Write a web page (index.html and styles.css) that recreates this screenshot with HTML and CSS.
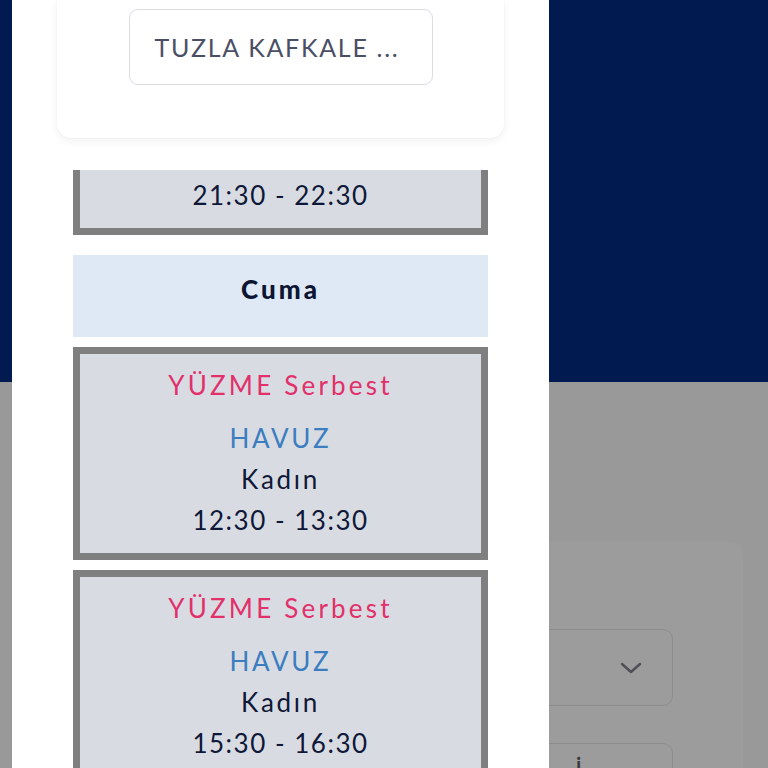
FILE: index.html
```html
<!DOCTYPE html>
<html lang="tr">
<head>
<meta charset="utf-8">
<title>Seans Programı</title>
<link rel="stylesheet" href="styles.css">
</head>
<body>
<div class="page">
  <div class="hero"></div>
  <div class="content">
    <div class="filter-card">
      <div class="select">
        <svg class="chev" width="22" height="12" viewBox="0 0 22 12"><polyline points="2,2 11,10 20,2" fill="none" stroke="#4f4f57" stroke-width="2.4" stroke-linecap="round" stroke-linejoin="round"/></svg>
      </div>
      <div class="select select-second"><span class="select-text">İ</span></div>
    </div>
  </div>
</div>

<div class="modal">
  <div class="top-card">
    <div class="facility-input">TUZLA KAFKALE ...</div>
  </div>
  <div class="schedule">
    <div class="list">
      <div class="session">
        <p class="activity">YÜZME Serbest</p>
        <p class="place">HAVUZ</p>
        <p class="line">Kadın</p>
        <p class="line time">21:30 - 22:30</p>
      </div>
      <div class="day">Cuma</div>
      <div class="session">
        <p class="activity">YÜZME Serbest</p>
        <p class="place">HAVUZ</p>
        <p class="line">Kadın</p>
        <p class="line time">12:30 - 13:30</p>
      </div>
      <div class="session">
        <p class="activity">YÜZME Serbest</p>
        <p class="place">HAVUZ</p>
        <p class="line">Kadın</p>
        <p class="line time">15:30 - 16:30</p>
      </div>
    </div>
  </div>
</div>
</body>
</html>
```
FILE: styles.css
```css
* { box-sizing: border-box; }
html, body { margin: 0; padding: 0; }
body {
  width: 768px;
  height: 768px;
  overflow: hidden;
  font-family: "Lato", "Noto Sans", sans-serif;
  background: #999999;
}
.page { width: 768px; height: 768px; }
.hero { height: 382px; background: #011a4f; }
.content { padding-top: 160px; }
.filter-card {
  margin-left: 25px;
  width: 718px;
  height: 300px;
  background: #9c9c9c;
  border-radius: 12px;
  padding: 87px 70px 0 70px;
  display: flex;
  flex-direction: column;
  gap: 37px;
}
.select {
  width: 578px;
  height: 77px;
  border: 1.5px solid #8c8c8c;
  border-radius: 10px;
  display: flex;
  align-items: center;
  justify-content: flex-end;
  padding: 0 30px 0 30px;
  flex: none;
}
.select-second {
  align-items: flex-start;
  justify-content: flex-start;
  padding: 12px 0 0 479px;
}
.select-text { color: #3a3a40; font-size: 26px; line-height: 30px; }
.chev { flex: none; }

.modal {
  position: absolute;
  left: 12px;
  top: 0;
  width: 537px;
  height: 768px;
  background: #ffffff;
  display: flex;
  flex-direction: column;
}
.top-card {
  margin: 0 45px;
  height: 138px;
  background: #ffffff;
  border-radius: 0 0 14px 14px;
  box-shadow: 0 3px 10px rgba(0, 0, 0, 0.06), 0 0 2px rgba(0, 0, 0, 0.05);
  padding-top: 9px;
  display: flex;
  justify-content: center;
  flex: none;
}
.facility-input {
  width: 304px;
  height: 76px;
  border: 1.5px solid #dcdde3;
  border-radius: 9px;
  padding-left: 25px;
  display: flex;
  align-items: center;
  font-size: 25px;
  color: #4b4f66;
  letter-spacing: 1.7px;
}
.schedule {
  margin-top: 32px;
  flex: 1;
  overflow: hidden;
  padding: 0 61px;
}
.list {
  margin-top: -148px;
  display: flex;
  flex-direction: column;
  gap: 10px;
}
.session {
  background: #d8dce2;
  border: 7px solid #7f7f7f;
  padding: 11px 0 12px;
  text-align: center;
}
.session p {
  margin: 0;
  height: 41px;
  line-height: 41px;
  font-size: 26px;
  letter-spacing: 2.7px;
  color: #0f1838;
  white-space: nowrap;
}
.session .time { letter-spacing: 1.5px; }
.session .activity { color: #e2306a; margin-bottom: 12px; letter-spacing: 3.2px; }
.session .place { color: #3b7dbf; }
.day {
  margin-top: 10px;
  height: 82px;
  background: #dfe9f6;
  padding-top: 16px;
  line-height: 36px;
  text-align: center;
  font-size: 26px;
  font-weight: 900;
  letter-spacing: 3px;
  color: #0c1632;
}
```
